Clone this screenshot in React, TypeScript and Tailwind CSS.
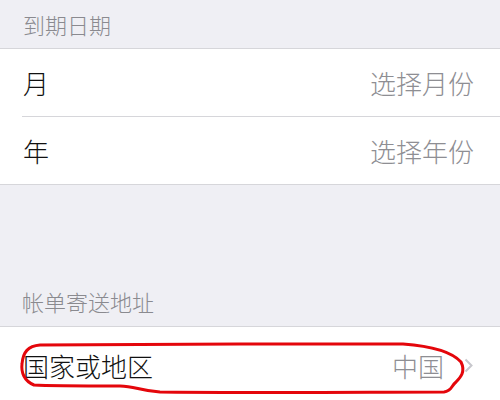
import React from "react";

const font = { fontFamily: '"Noto Sans CJK SC", "Noto Sans", sans-serif' };

export default function App() {
  return (
    <div className="relative w-[500px] h-[400px] overflow-hidden bg-[#efeff4]" style={font}>
      <div className="h-[48px] pl-[23px] pt-[12px] text-[22px] leading-[24px] font-light text-[#8a8a8f]">到期日期</div>
      <div className="bg-white border-y border-[#d6d6da]">
        <div className="ml-[22px] h-[68px] flex items-center justify-between pr-[26px] border-b border-[#d6d6da]">
          <span className="ml-[1px] text-[26px] font-light text-[#111]">月</span>
          <span className="text-[26px] font-light text-[#8e8e93]">选择月份</span>
        </div>
        <div className="ml-[22px] h-[67px] flex items-center justify-between pr-[26px]">
          <span className="ml-[1px] text-[26px] font-light text-[#111]">年</span>
          <span className="text-[26px] font-light text-[#8e8e93]">选择年份</span>
        </div>
      </div>
      <div className="h-[141px] flex items-end pl-[22px] pb-[13px] text-[22px] leading-[24px] font-light text-[#8a8a8f]">帐单寄送地址</div>
      <div className="bg-white border-t border-[#d6d6da] h-[80px]">
        <div className="ml-[22px] h-[76px] flex items-center justify-between pr-[27px]">
          <span className="ml-[1px] text-[26px] font-light text-[#111]">国家或地区</span>
          <div className="flex items-center gap-[20px]">
            <span className="text-[26px] font-light text-[#8e8e93]">中国</span>
            <svg width="9" height="15" viewBox="0 0 9 15">
              <path d="M1.5 1.5 L7.5 7.5 L1.5 13.5" fill="none" stroke="#c7c7cc" strokeWidth="2" />
            </svg>
          </div>
        </div>
      </div>
      <svg className="absolute left-0 top-0 pointer-events-none" width="500" height="400" viewBox="0 0 500 400">
        <path
          d="M40 345 C120 344 300 344 403 344 C430 346 452 352 461 362 C466 372 460 378 456 382 C451 386 452 391 444 392 C380 392 230 393 160 392 C140 391 135 386 120 386 C90 386 50 386 34 385 C24 381 21 372 22 364 C23 352 28 346 40 345 Z"
          fill="none"
          stroke="#e4060b"
          strokeWidth="3"
          strokeLinejoin="round"
        />
      </svg>
    </div>
  );
}
